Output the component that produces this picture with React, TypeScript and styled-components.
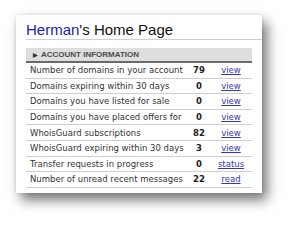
import React from 'react'
import styled, { createGlobalStyle } from 'styled-components'

const GlobalStyle = createGlobalStyle`
  html, body {
    margin: 0;
    padding: 0;
    background: #fff;
  }
`

const Page = styled.div`
  width: 300px;
  height: 227px;
  padding: 15px 0 0 16px;
  box-sizing: border-box;
  overflow: hidden;
`

const Card = styled.div`
  width: 246px;
  height: 178px;
  box-sizing: border-box;
  padding-left: 10px;
  background: #fff;
  box-shadow: 5px 7px 12px rgba(0, 0, 0, 0.55), 0 0 3px rgba(0, 0, 0, 0.12);
`

const Title = styled.h1`
  margin: 0;
  padding-top: 5px;
  height: 19px;
  line-height: 19px;
  font-family: 'Liberation Sans', Arial, sans-serif;
  font-weight: normal;
  font-size: 15px;
  color: #111;
  border-bottom: 1px solid #cfcfcf;
  white-space: nowrap;
`

const Owner = styled.span`
  color: #1c1ca6;
`

const Table = styled.div`
  width: 226px;
  margin-top: 8px;
  font-family: 'DejaVu Sans', Verdana, sans-serif;
`

const SectionHeader = styled.div`
  height: 13px;
  display: flex;
  align-items: center;
  gap: 3px;
  padding-left: 7px;
  background: #dedede;
  border-bottom: 2px solid #6a6a6a;
  font-family: 'Liberation Sans', Arial, sans-serif;
  font-size: 8px;
  font-weight: bold;
  color: #4a4a4a;
`

const Arrow = styled.span`
  font-size: 5.5px;
  color: #333;
`

const Row = styled.div`
  display: grid;
  grid-template-columns: 1fr 22px 42px;
  align-items: center;
  height: 15.6px;
  box-sizing: border-box;
  border-bottom: 1px solid #cfcfcf;
  font-size: 8.5px;
  color: #333;
`

const Label = styled.span`
  padding-left: 4px;
  white-space: nowrap;
`

const Count = styled.span`
  text-align: center;
  font-weight: bold;
  color: #222;
`

const Action = styled.a`
  text-align: center;
  color: #3636b8;
  text-decoration: underline;
`

const rows = [
  { label: 'Number of domains in your account', count: 79, action: 'view' },
  { label: 'Domains expiring within 30 days', count: 0, action: 'view' },
  { label: 'Domains you have listed for sale', count: 0, action: 'view' },
  { label: 'Domains you have placed offers for', count: 0, action: 'view' },
  { label: 'WhoisGuard subscriptions', count: 82, action: 'view' },
  { label: 'WhoisGuard expiring within 30 days', count: 3, action: 'view' },
  { label: 'Transfer requests in progress', count: 0, action: 'status' },
  { label: 'Number of unread recent messages', count: 22, action: 'read' }
]

const App: React.FC = () => {
  return (
    <Page>
      <GlobalStyle />
      <Card>
        <Title>
          <Owner>Herman</Owner>'s Home Page
        </Title>
        <Table>
          <SectionHeader>
            <Arrow>▶</Arrow>
            ACCOUNT INFORMATION
          </SectionHeader>
          {rows.map((r) => (
            <Row key={r.label}>
              <Label>{r.label}</Label>
              <Count>{r.count}</Count>
              <Action href="#">{r.action}</Action>
            </Row>
          ))}
        </Table>
      </Card>
    </Page>
  )
}

export default App
